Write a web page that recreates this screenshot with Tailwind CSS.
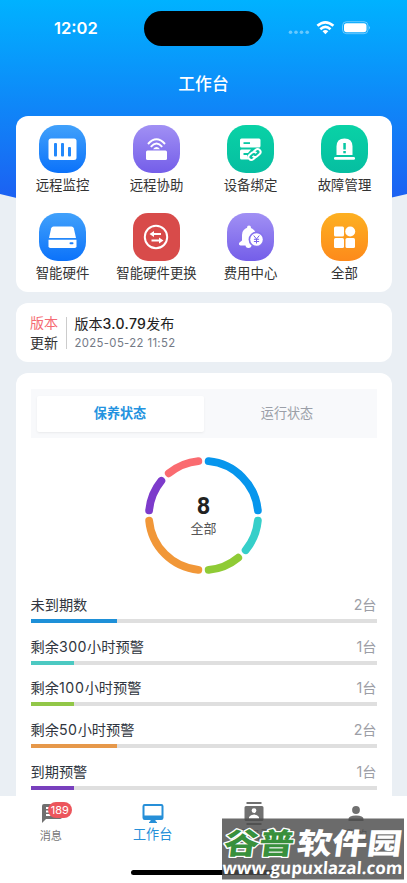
<!DOCTYPE html>
<html lang="zh-CN">
<head>
<meta charset="utf-8">
<title>工作台</title>
<script src="https://cdn.jsdelivr.net/npm/@tailwindcss/browser@4"></script>
</head>
<body class="bg-[#eaeff4]">
<div class="relative h-[883px] w-[407px] overflow-hidden bg-[#eaeff4] font-[Inter,'Noto_Sans_CJK_SC',sans-serif] text-[#333]">
  <!-- curved header background -->
  <svg class="absolute left-0 top-0" width="407" height="240" viewBox="0 0 407 240">
    <defs><linearGradient id="hd" x1="0" y1="0" x2="0" y2="200" gradientUnits="userSpaceOnUse"><stop offset="0" stop-color="#00b2ff"/><stop offset="1" stop-color="#1c60f2"/></linearGradient></defs>
    <path d="M0 0H407V194Q203 246 0 194Z" fill="url(#hd)"/>
  </svg>

  <div class="relative flex h-[883px] flex-col">
    <!-- status bar -->
    <div class="flex h-14 shrink-0 items-center pl-[54px] pr-9 text-white">
      <div class="w-[90px] text-[16.5px] font-semibold leading-none">12:02</div>
      <div class="mt-px h-[35px] w-[119px] rounded-full bg-black"></div>
      <svg class="ml-auto" width="84" height="16" viewBox="0 0 84 16" fill="none">
        <g fill="#fff" opacity=".4"><circle cx="3.5" cy="12.3" r="1.8"/><circle cx="9" cy="12.3" r="1.8"/><circle cx="14.500" cy="12.3" r="1.8"/><circle cx="20.200" cy="12.3" r="1.8"/></g>
        <g stroke="#fff" stroke-width="2.700"><path d="M30.400 5.800Q38.400-1.200 46.400 5.800"/><path d="M33.300 9.200Q38.400 4.700 43.500 9.200"/></g>
        <path d="M35.500 11.300Q38.400 8.800 41.300 11.300L38.400 14.200Z" fill="#fff"/>
        <rect x="55.500" y="1.700" width="25.500" height="12" rx="4" stroke="#fff" stroke-opacity=".4"/>
        <rect x="57" y="3.200" width="22.500" height="9" rx="2.600" fill="#fff"/>
        <path d="M82 5.800Q83.700 7.700 82 9.600Z" fill="#fff" opacity=".6"/>
      </svg>
    </div>
    <div class="flex h-[60px] shrink-0 items-center justify-center pb-[3px] text-[16.8px] font-medium text-white">工作台</div>

    <!-- shortcuts -->
    <div class="mx-[15.5px] grid h-[176px] shrink-0 grid-cols-4 rounded-[12px] bg-white pt-[9px] text-[13.4px] leading-5 text-[#333]">
      <div class="flex h-[88px] flex-col items-center gap-[2px]">
        <svg width="47" height="48" viewBox="0 0 47 48"><defs><linearGradient id="b" x2="0" y2="1"><stop stop-color="#41a1fb"/><stop offset="1" stop-color="#0b72fa"/></linearGradient></defs><rect width="47" height="48" rx="19" fill="url(#b)"/><rect x="9.500" y="13.500" width="28" height="21.500" rx="2.500" fill="#fff"/><g fill="#2388fb"><rect x="15" y="18" width="3" height="13.500" rx="1"/><rect x="22" y="18" width="3" height="13.500" rx="1"/><rect x="29" y="22" width="3" height="9.500" rx="1"/></g></svg>
        <span>远程监控</span>
      </div>
      <div class="flex h-[88px] flex-col items-center gap-[2px]">
        <svg width="47" height="48" viewBox="0 0 47 48"><defs><linearGradient id="p" x2="0" y2="1"><stop stop-color="#a190f4"/><stop offset="1" stop-color="#745ee9"/></linearGradient></defs><rect width="47" height="48" rx="19" fill="url(#p)"/><rect x="13" y="25.500" width="21" height="9.500" rx="1.500" fill="#fff"/><g fill="none" stroke="#fff" stroke-width="1.900"><path d="M15 19Q23.500 9.500 32 19"/><path d="M17.800 21.800Q23.500 15.300 29.200 21.800"/></g><path d="M20 24.300Q23.500 19.500 27 24.300Z" fill="#fff"/></svg>
        <span>远程协助</span>
      </div>
      <div class="flex h-[88px] flex-col items-center gap-[2px]">
        <svg width="47" height="48" viewBox="0 0 47 48"><defs><linearGradient id="g" x2="0" y2="1"><stop stop-color="#09d2a6"/><stop offset="1" stop-color="#06bea1"/></linearGradient></defs><rect width="47" height="48" rx="19" fill="url(#g)"/><rect x="13" y="13.500" width="20.500" height="9" rx="1.500" fill="#fff"/><rect x="16.500" y="17.200" width="6.500" height="1.800" fill="#08c8a4"/><path d="M14.500 24.500H24L21 28H16.500V30H20L21.500 34.500H14.500Q13 34.500 13 33V26Q13 24.500 14.500 24.500Z" fill="#fff"/><g transform="rotate(-40 27.500 29.500)" fill="none" stroke="#fff" stroke-width="2"><path d="M26.500 32.300H23.500A2.900 2.900 0 0 1 23.500 26.500H27A2.900 2.900 0 0 1 29.800 29.600"/><path d="M28.500 26.700H31.500A2.900 2.900 0 0 1 31.500 32.500H28A2.900 2.900 0 0 1 25.200 29.400"/></g></svg>
        <span>设备绑定</span>
      </div>
      <div class="flex h-[88px] flex-col items-center gap-[2px]">
        <svg width="47" height="48" viewBox="0 0 47 48"><rect width="47" height="48" rx="19" fill="url(#g)"/><path d="M15.500 30V21.500Q15.500 13.500 23.500 13.500T31.500 21.500V30Z" fill="#fff"/><rect x="13" y="32" width="21" height="2.700" rx="1.300" fill="#fff"/><rect x="22.300" y="18" width="2.500" height="6.500" fill="#07c7a4"/><rect x="22.300" y="26" width="2.500" height="2.300" fill="#07c7a4"/></svg>
        <span>故障管理</span>
      </div>
      <div class="flex h-[88px] flex-col items-center gap-[2px]">
        <svg width="47" height="48" viewBox="0 0 47 48"><rect width="47" height="48" rx="19" fill="url(#b)"/><path d="M14.500 13.500H32.500Q34.300 13.500 34.800 15.300L37 25H10L12.200 15.300Q12.700 13.500 14.500 13.500Z" fill="#fff"/><path d="M9.500 26.700H37.500V33.200Q37.500 35 35.700 35H11.300Q9.500 35 9.500 33.200Z" fill="#fff"/><rect x="30.500" y="29.300" width="4" height="2" rx="1" fill="#1c80fb"/></svg>
        <span>智能硬件</span>
      </div>
      <div class="flex h-[88px] flex-col items-center gap-[2px]">
        <svg width="47" height="48" viewBox="0 0 47 48"><rect width="47" height="48" rx="15" fill="#d84b4a"/><circle cx="23" cy="24" r="11.200" fill="none" stroke="#fff" stroke-width="2"/><g fill="#fff"><path d="M16.500 21L21 18V20.100H28V22H21V24Z"/><path d="M30.500 27.500L26 24.500V26.500H18.500V28.500H26V30.500Z"/></g></svg>
        <span class="whitespace-nowrap">智能硬件更换</span>
      </div>
      <div class="flex h-[88px] flex-col items-center gap-[2px]">
        <svg width="47" height="48" viewBox="0 0 47 48"><rect width="47" height="48" rx="19" fill="url(#p)"/><circle cx="22" cy="14.500" r="2" fill="#fff"/><path d="M22 14.500Q29 15.500 29 23V31L30 32.500H13.500Q11 32 12.500 29.500L15 27.500V22Q15 15.500 22 14.500Z" fill="#fff"/><path d="M18.500 32A3 3 0 0 0 24.500 32Z" fill="#fff"/><circle cx="29.500" cy="26.500" r="7.900" fill="#8572ee"/><circle cx="29.500" cy="26.500" r="6.300" fill="#fff"/><path d="M26.700 22.500L29.500 26L32.300 22.500M29.500 26V30.500M26.900 26.300H32.100M26.900 28.500H32.100" fill="none" stroke="#7966eb" stroke-width="1"/></svg>
        <span>费用中心</span>
      </div>
      <div class="flex h-[88px] flex-col items-center gap-[2px]">
        <svg width="47" height="48" viewBox="0 0 47 48"><defs><linearGradient id="o" x2="0" y2="1"><stop stop-color="#fdb021"/><stop offset="1" stop-color="#fd8a1b"/></linearGradient></defs><rect width="47" height="48" rx="19" fill="url(#o)"/><g fill="#fff"><rect x="13" y="13.500" width="10" height="10" rx="1.500"/><circle cx="29.200" cy="18.500" r="5"/><rect x="13" y="25" width="10" height="10" rx="1.500"/><rect x="24.500" y="25" width="9.500" height="10" rx="1.500"/></g></svg>
        <span>全部</span>
      </div>
    </div>

    <!-- release notice -->
    <div class="mx-[15.5px] mt-[11px] flex h-[59px] shrink-0 items-center rounded-[12px] bg-white pl-[14.5px]">
      <div class="text-[14px] leading-5"><div class="text-[#f56c74]">版本</div><div>更新</div></div>
      <div class="ml-2 mr-[7.500px] h-8 w-px bg-[#ccc]"></div>
      <div>
        <div class="text-[14px] leading-5 text-[#222]">版本<span class="font-medium tracking-[0.35px]">3.0.79</span>发布</div>
        <div class="text-[11.3px] leading-[18px] tracking-[0.38px] text-[#737986]">2025-05-22 11:52</div>
      </div>
    </div>

    <!-- status summary -->
    <div class="mx-[15.5px] mt-[11px] flex min-h-0 flex-1 flex-col overflow-hidden rounded-t-[12px] bg-white px-[15px] pt-4">
      <div class="flex h-[49px] shrink-0 items-center bg-[#f8f9fb] px-[6px] text-[13.100px]">
        <div class="flex h-9 flex-1 items-center justify-center rounded-[2px] bg-white font-bold text-[#2493e0] shadow-sm shadow-black/5">保养状态</div>
        <div class="flex h-9 flex-1 items-center justify-center text-[#9b9fa8]">运行状态</div>
      </div>
      <div class="mt-[18px] grid h-[119px] shrink-0 place-items-center">
        <svg class="col-start-1 row-start-1" width="119" height="119" viewBox="0 0 119 119">
          <g fill="none" stroke-width="7.800" stroke-linecap="round" transform="rotate(-90 59.500 59.500)">
            <circle cx="59.500" cy="59.500" r="54.600" pathLength="360" stroke="#0796ed" stroke-dasharray="79 281" stroke-dashoffset="-5.500"/>
            <circle cx="59.500" cy="59.500" r="54.600" pathLength="360" stroke="#36cfc9" stroke-dasharray="34 326" stroke-dashoffset="-95.500"/>
            <circle cx="59.500" cy="59.500" r="54.600" pathLength="360" stroke="#8fcb35" stroke-dasharray="34 326" stroke-dashoffset="-140.500"/>
            <circle cx="59.500" cy="59.500" r="54.600" pathLength="360" stroke="#f19738" stroke-dasharray="79 281" stroke-dashoffset="-185.500"/>
            <circle cx="59.500" cy="59.500" r="54.600" pathLength="360" stroke="#7d3bcb" stroke-dasharray="34 326" stroke-dashoffset="-275.500"/>
            <circle cx="59.500" cy="59.500" r="54.600" pathLength="360" stroke="#fa6b70" stroke-dasharray="34 326" stroke-dashoffset="-320.500"/>
          </g>
        </svg>
        <div class="col-start-1 row-start-1 pt-px text-center">
          <div class="font-[Roboto,sans-serif] text-[23.500px] font-bold leading-6 text-[#222]">8</div>
          <div class="text-[13px] leading-5 text-[#555]">全部</div>
        </div>
      </div>
      <div class="mt-[18px] shrink-0 text-[14.200px] leading-[24px] text-[#303640]">
        <div class="h-[41.700px]"><div class="flex justify-between"><span>未到期数</span><span class="text-[#9c9ea6]">2台</span></div><div class="mt-[2px] h-1 bg-[#dfdfdf]"><div class="h-1 bg-[#1e90d8]" style="width:25%"></div></div></div>
        <div class="h-[41.700px]"><div class="flex justify-between"><span>剩余<span class="tracking-[0.5px]">300</span>小时预警</span><span class="text-[#9c9ea6]">1台</span></div><div class="mt-[2px] h-1 bg-[#dfdfdf]"><div class="h-1 bg-[#4cc9c2]" style="width:12.5%"></div></div></div>
        <div class="h-[41.700px]"><div class="flex justify-between"><span>剩余<span class="tracking-[0.7px]">100</span>小时预警</span><span class="text-[#9c9ea6]">1台</span></div><div class="mt-[2px] h-1 bg-[#dfdfdf]"><div class="h-1 bg-[#92c748]" style="width:12.5%"></div></div></div>
        <div class="h-[41.700px]"><div class="flex justify-between"><span>剩余<span class="tracking-[0.6px]">50</span>小时预警</span><span class="text-[#9c9ea6]">2台</span></div><div class="mt-[2px] h-1 bg-[#dfdfdf]"><div class="h-1 bg-[#e6984a]" style="width:25%"></div></div></div>
        <div class="h-[41.700px]"><div class="flex justify-between"><span>到期预警</span><span class="text-[#9c9ea6]">1台</span></div><div class="mt-[2px] h-1 bg-[#dfdfdf]"><div class="h-1 bg-[#783fbd]" style="width:12.5%"></div></div></div>
      </div>
    </div>

    <!-- tab bar -->
    <div class="relative grid h-[87px] shrink-0 grid-cols-4 items-start bg-white pt-[6px] text-[11.200px] text-[#777]">
      <div class="flex flex-col items-center pt-px">
        <div class="relative h-[25px] w-6">
          <svg class="absolute left-[1px] top-[-2px]" width="24" height="24" viewBox="0 0 24 24"><path d="M4 3H20Q22 3 22 5V16Q22 18 20 18H6L2 22V5Q2 3 4 3Z" fill="#707070"/><path d="M6 7h12M6 10.500h12M6 14h9" stroke="#fff" stroke-width="1.800"/></svg>
          <span class="absolute left-[9px] top-[-1px] flex h-4 w-[24px] items-center justify-center rounded-full bg-[#ec555c] text-[11px] text-white">189</span>
        </div>
        <span class="leading-4">消息</span>
      </div>
      <div class="flex flex-col items-center text-[#268fd8]">
        <svg width="24" height="22" viewBox="0 0 24 22"><rect x="2.500" y="3" width="19" height="14" rx="1.200" fill="none" stroke="currentColor" stroke-width="2"/><path d="M2 13.500H22V16.500H14.500V19L16 20.200V21H8V20.200L9.500 19V16.500H2Z" fill="currentColor"/></svg>
        <span class="text-[13.100px] leading-5">工作台</span>
      </div>
      <div class="flex flex-col items-center">
        <svg width="24" height="25" viewBox="0 0 24 25" fill="#707070"><path d="M4.500 0H19.500V2H4.500ZM4.500 21H19.500V23H4.500Z"/><path fill-rule="evenodd" d="M4 4H20Q21.500 4 21.500 5.500V17.500Q21.500 19 20 19H4Q2.500 19 2.500 17.500V5.500Q2.500 4 4 4ZM12 6.200A2.400 2.400 0 1 0 12 11A2.400 2.400 0 1 0 12 6.200M7 16.500H17V15Q15.500 12.500 12 12.500T7 15Z"/></svg>
        <span class="leading-4">通讯录</span>
      </div>
      <div class="flex flex-col items-center">
        <svg width="24" height="25" viewBox="0 0 24 25" fill="#707070"><circle cx="12" cy="8" r="3.900"/><path d="M4.500 19V17Q4.500 13.500 12 13.500T19.500 17V19Z"/></svg>
        <span class="leading-4">我的</span>
      </div>
      <div class="absolute left-[131px] top-[74px] h-[5px] w-[145px] rounded-full bg-black"></div>
      <!-- site watermark overlay -->
      <svg class="absolute left-[222px] top-[22px]" width="183" height="63" viewBox="0 0 183 63">
        <rect y=".5" width="182" height="61" fill="#4a4a4a" fill-opacity=".82"/>
        <g font-family="'Noto Sans CJK SC',sans-serif" font-size="34" font-weight="900" transform="translate(0 36) skewX(-7) scale(1 .86)">
          <text x="1" y="0" textLength="70" lengthAdjust="spacingAndGlyphs" fill="#38903c" stroke="#fff" stroke-width="3" stroke-linejoin="round" paint-order="stroke">谷普</text>
          <text x="74" y="0" textLength="105" lengthAdjust="spacingAndGlyphs" fill="#fff">软件园</text>
        </g>
        <text transform="translate(0 55.500) skewX(-4)" textLength="180" lengthAdjust="spacingAndGlyphs" fill="#fff" font-family="'Open Sans',sans-serif" font-size="17" font-weight="700">www.gupuxlazal.com</text>
      </svg>
    </div>
  </div>
</div>
</body>
</html>
